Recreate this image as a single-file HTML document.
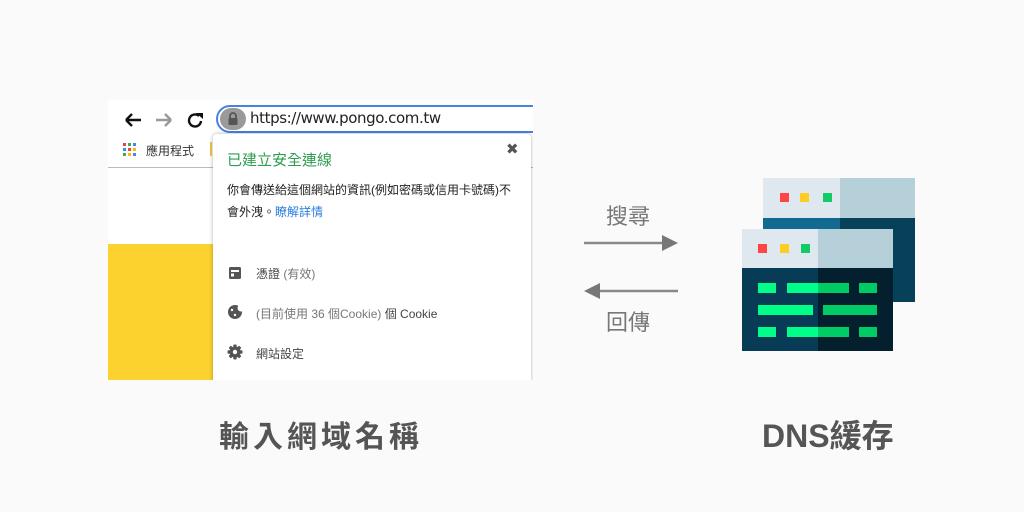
<!DOCTYPE html><html><head><meta charset="utf-8"><style>
body{margin:0;width:1024px;height:512px;background:#fafafa;position:relative;overflow:hidden;font-family:"Liberation Sans","Noto Sans CJK TC",sans-serif}
.a{position:absolute}
.t{font-family:"Liberation Sans","Noto Sans CJK TC",sans-serif}
</style></head><body>
<div class="a" style="left:108px;top:100px;width:425px;height:280px;background:#fff;overflow:hidden">
 <div class="a" style="left:0;top:67px;width:425px;height:1px;background:#bbb"></div>
 <div class="a" style="left:0;top:144px;width:110px;height:136px;background:#fcd22e"></div>
 <svg class="a" style="left:15px;top:10px" width="100" height="20"><path d="M3 10h15M3 10l6-6M3 10l6 6" stroke="#111" stroke-width="2.4" fill="none"/><path d="M33 10h15M48 10l-6-6M48 10l-6 6" stroke="#999" stroke-width="2.4" fill="none"/><path d="M76 6a6 6 0 1 0 2 5" stroke="#111" stroke-width="2.4" fill="none"/><path d="M73 3h7v6z" fill="#111"/></svg>
 <svg class="a" style="left:15px;top:43px" width="14" height="14"><g><rect x="0" y="0" width="3" height="3" fill="#e44"/><rect x="5" y="0" width="3" height="3" fill="#4a4"/><rect x="10" y="0" width="3" height="3" fill="#48e"/><rect x="0" y="5" width="3" height="3" fill="#48e"/><rect x="5" y="5" width="3" height="3" fill="#e44"/><rect x="10" y="5" width="3" height="3" fill="#fb0"/><rect x="0" y="10" width="3" height="3" fill="#4a4"/><rect x="5" y="10" width="3" height="3" fill="#fb0"/><rect x="10" y="10" width="3" height="3" fill="#48e"/></g></svg>
 <div class="a t" style="left:38px;top:42px;font-size:12px;color:#333">應用程式</div>
 <div class="a" style="left:102px;top:42px;width:2px;height:14px;background:#f4c542"></div>
 <div class="a" style="left:108px;top:5px;width:330px;height:24px;border:2px solid #4a80e0;border-radius:14px;background:#fff"></div>
 <div class="a" style="left:112px;top:8px;width:26px;height:22px;border-radius:11px;background:#9a9a9a"></div>
 <svg class="a" style="left:118px;top:11px" width="14" height="15"><path d="M4 7V5a3 3 0 0 1 6 0v2" stroke="#555" stroke-width="1.8" fill="none"/><rect x="2.5" y="7" width="9" height="7" rx="1" fill="#555"/></svg>
 <div class="a" style="left:142px;top:9px;font-size:15px;color:#222;font-family:'DejaVu Sans',sans-serif;letter-spacing:-0.4px">https://www.pongo.com.tw</div>
 <div class="a" style="left:105px;top:34px;width:318px;height:250px;background:#fff;box-shadow:0 0 4px rgba(0,0,0,.3);border-radius:4px">
  <div class="a" style="left:293px;top:6px;font-size:15px;color:#555">✖</div>
  <div class="a t" style="left:14px;top:15px;font-size:15px;color:#2e9d4f">已建立安全連線</div>
  <div class="a t" style="left:14px;top:45px;font-size:12px;color:#222;line-height:22px;width:310px;white-space:nowrap">你會傳送給這個網站的資訊(例如密碼或信用卡號碼)不<br>會外洩。<span style="color:#2a7ee0">瞭解詳情</span></div>
  <svg class="a" style="left:15px;top:132px" width="14" height="14"><rect x="1" y="1" width="12" height="12" rx="1.5" fill="#555"/><rect x="3" y="4" width="8" height="2" fill="#fff"/><rect x="3" y="7.5" width="3" height="3" fill="#fff"/></svg>
  <div class="a t" style="left:43px;top:131px;font-size:12px;color:#444">憑證 <span style="color:#777">(有效)</span></div>
  <svg class="a" style="left:14px;top:170px" width="16" height="16"><circle cx="8" cy="8" r="7" fill="#555"/><circle cx="14" cy="4" r="3.5" fill="#fff"/><circle cx="5" cy="6" r="1.2" fill="#fff"/><circle cx="8" cy="11" r="1.2" fill="#fff"/></svg>
  <div class="a t" style="left:43px;top:171px;font-size:12px;color:#777">(目前使用 36 個Cookie) <span style="color:#444">個 Cookie</span></div>
  <svg class="a" style="left:14px;top:210px" width="16" height="16"><g fill="#555"><circle cx="8" cy="8" r="5.5"/><rect x="6.3" y="0.5" width="3.4" height="15" rx="1"/><rect x="6.3" y="0.5" width="3.4" height="15" rx="1" transform="rotate(45 8 8)"/><rect x="6.3" y="0.5" width="3.4" height="15" rx="1" transform="rotate(90 8 8)"/><rect x="6.3" y="0.5" width="3.4" height="15" rx="1" transform="rotate(135 8 8)"/></g><circle cx="8" cy="8" r="2.2" fill="#fff"/></svg>
  <div class="a t" style="left:43px;top:211px;font-size:12px;color:#444">網站設定</div>
 </div>
</div>
<div class="a t" style="left:606px;top:199px;font-size:22px;color:#777">搜尋</div>
<svg class="a" style="left:580px;top:230px" width="105" height="75"><path d="M4 13h82" stroke="#888" stroke-width="2.5"/><path d="M82 5l16 8-16 8z" fill="#777"/><path d="M98 61H20" stroke="#888" stroke-width="2.5"/><path d="M20 53L4 61l16 8z" fill="#777"/></svg>
<div class="a t" style="left:606px;top:305px;font-size:22px;color:#777">回傳</div>
<svg class="a" style="left:0;top:0" width="1024" height="512">
<rect x="763" y="178" width="77" height="40" fill="#dfe8ee"/><rect x="840" y="178" width="75" height="40" fill="#b5d0d8"/>
<rect x="763" y="218" width="77" height="84" fill="#136a90"/><rect x="840" y="218" width="75" height="84" fill="#064059"/>
<rect x="780" y="193" width="9" height="9" fill="#f44"/><rect x="800" y="193" width="9" height="9" fill="#fc2"/><rect x="823" y="193" width="9" height="9" fill="#1c6"/>
<rect x="742" y="229" width="76" height="39" fill="#dfe8ee"/><rect x="818" y="229" width="75" height="39" fill="#b5d0d8"/>
<rect x="742" y="268" width="76" height="83" fill="#073b56"/><rect x="818" y="268" width="75" height="83" fill="#041f2d"/>
<rect x="758" y="244" width="9" height="9" fill="#f44"/><rect x="780" y="244" width="9" height="9" fill="#fc2"/><rect x="801" y="244" width="9" height="9" fill="#1c6"/>
<g fill="#0f8"><rect x="758" y="283" width="18" height="10"/><rect x="787" y="283" width="31" height="10"/><rect x="758" y="305" width="55" height="10"/><rect x="758" y="327" width="18" height="10"/><rect x="787" y="327" width="31" height="10"/></g>
<g fill="#0c6"><rect x="818" y="283" width="31" height="10"/><rect x="859" y="283" width="18" height="10"/><rect x="823" y="305" width="54" height="10"/><rect x="818" y="327" width="31" height="10"/><rect x="859" y="327" width="18" height="10"/></g>
</svg>
<div class="a t" style="left:219px;top:412px;font-size:30px;color:#555;letter-spacing:4px;font-weight:bold">輸入網域名稱</div>
<div class="a t" style="left:762px;top:411px;font-size:32px;color:#555;font-weight:bold">DNS緩存</div>
</body></html>
